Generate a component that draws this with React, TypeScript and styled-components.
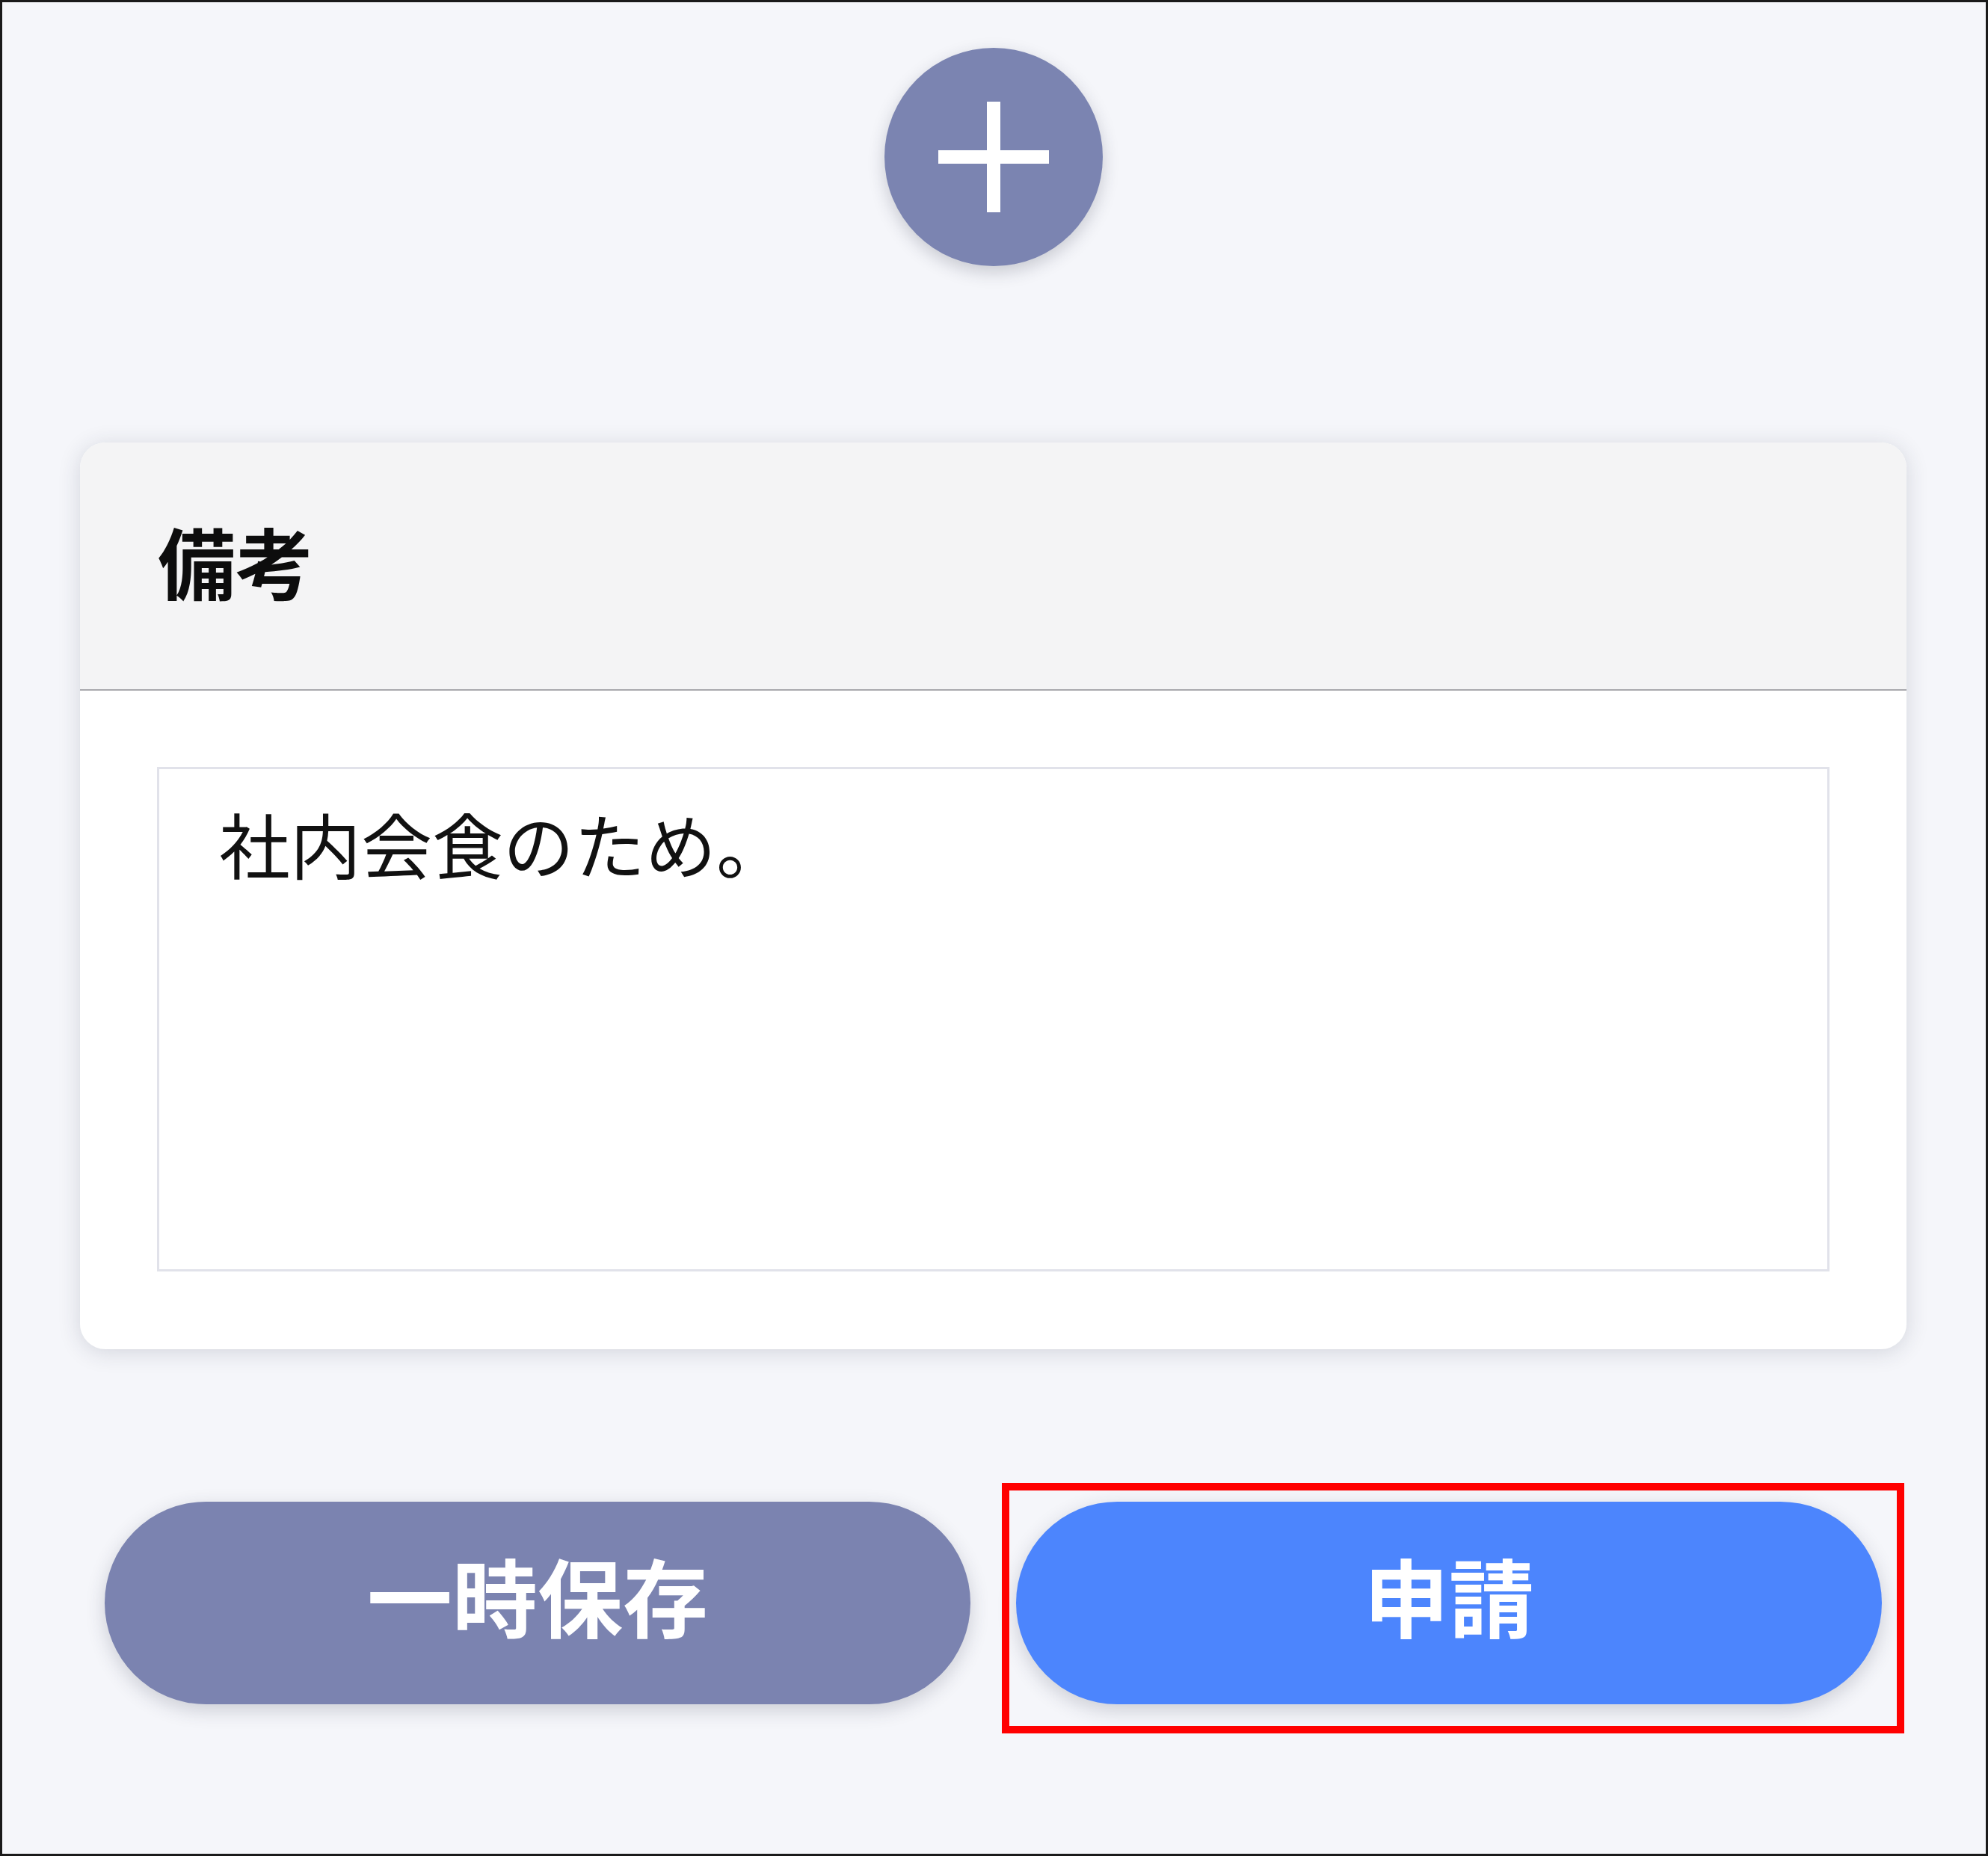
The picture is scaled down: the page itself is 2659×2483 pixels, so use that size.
import styled, { createGlobalStyle } from "styled-components";

const GlobalStyle = createGlobalStyle`
  html, body {
    margin: 0;
    padding: 0;
    background: #f5f6fa;
  }
  * {
    box-sizing: border-box;
  }
`;

const Frame = styled.div`
  width: 2659px;
  height: 2483px;
  border: 3px solid #1a1a1a;
  background-color: #f5f6fa;
  display: flex;
  flex-direction: column;
  align-items: center;
  padding: 61px 106px 0 104px;
  font-family: "Noto Sans CJK JP", "Noto Sans", sans-serif;
`;

const AddButton = styled.button`
  width: 292px;
  height: 292px;
  flex-shrink: 0;
  border: none;
  border-radius: 50%;
  background-color: #7b84b1;
  box-shadow: 0 8px 22px rgba(40, 44, 70, 0.22);
  display: flex;
  align-items: center;
  justify-content: center;
  padding: 0;
  cursor: pointer;
`;

const Card = styled.section`
  width: 100%;
  margin-top: 236px;
  background-color: #ffffff;
  border-radius: 34px;
  overflow: hidden;
  box-shadow: 0 4px 30px rgba(40, 44, 70, 0.16);
`;

const CardHeader = styled.div`
  height: 332px;
  background-color: #f4f4f5;
  border-bottom: 2px solid #a9a9ad;
  display: flex;
  align-items: center;
  padding: 0 0 14px 104px;
`;

const CardTitle = styled.h2`
  margin: 0;
  font-size: 104px;
  font-weight: 700;
  line-height: 1;
  color: #0d0d0d;
`;

const CardBody = styled.div`
  padding: 102px 103px 104px 103px;
`;

const Note = styled.textarea`
  display: block;
  width: 100%;
  height: 675px;
  resize: none;
  border: 3px solid #e1e2ea;
  border-radius: 0;
  background: #ffffff;
  padding: 28px 80px;
  font-family: "Noto Sans CJK JP", "Noto Sans", sans-serif;
  font-size: 95px;
  line-height: 1.5;
  color: #111111;
  outline: none;
  overflow: hidden;
`;

const Actions = styled.div`
  width: 100%;
  margin-top: 204px;
  padding: 0 33px;
  display: flex;
  gap: 61px;
`;

const Highlight = styled.div`
  flex: 1;
  display: flex;
  position: relative;

  &::after {
    content: "";
    position: absolute;
    top: -25px;
    left: -19px;
    right: -30px;
    bottom: -39px;
    border: 10px solid #ff0000;
    pointer-events: none;
  }
`;

const PillButton = styled.button<{ $tone: "muted" | "primary" }>`
  flex: 1;
  height: 271px;
  border: none;
  border-radius: 136px;
  background-color: ${(p) => (p.$tone === "primary" ? "#4c85fd" : "#7b83b0")};
  color: #ffffff;
  font-family: "Noto Sans CJK JP", "Noto Sans", sans-serif;
  font-size: 114px;
  font-weight: 700;
  line-height: 1;
  box-shadow: 0 8px 26px rgba(40, 44, 70, 0.2);
  cursor: pointer;
  padding: 0 0 24px 0;
`;

const PlusIcon = () => (
  <svg width="148" height="148" viewBox="0 0 148 148">
    <rect x="65" y="0" width="18" height="148" fill="#ffffff" />
    <rect x="0" y="65" width="148" height="18" fill="#ffffff" />
  </svg>
);

const App = () => {
  return (
    <>
      <GlobalStyle />
      <Frame>
        <AddButton aria-label="追加">
          <PlusIcon />
        </AddButton>
        <Card>
          <CardHeader>
            <CardTitle>備考</CardTitle>
          </CardHeader>
          <CardBody>
            <Note defaultValue="社内会食のため。" />
          </CardBody>
        </Card>
        <Actions>
          <PillButton $tone="muted">一時保存</PillButton>
          <Highlight>
            <PillButton $tone="primary">申請</PillButton>
          </Highlight>
        </Actions>
      </Frame>
    </>
  );
};

export default App;
